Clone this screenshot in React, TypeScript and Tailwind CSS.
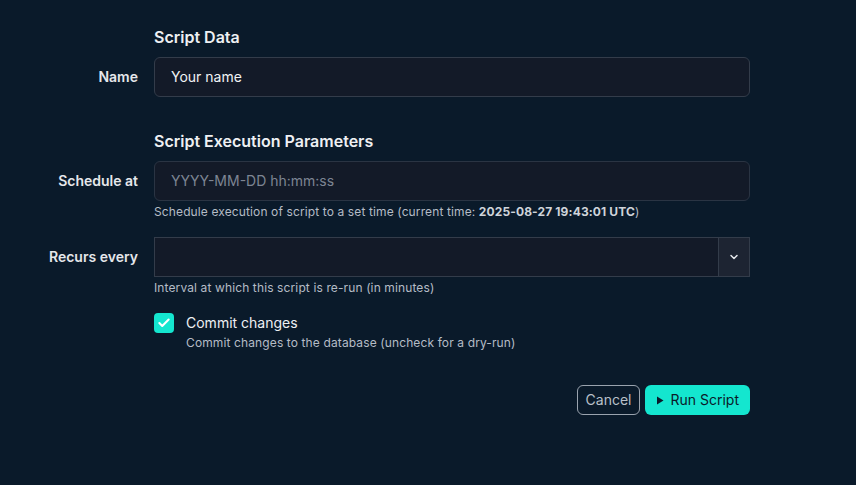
import { Check, ChevronDown } from "lucide-react";

function Label({ text }: { text: string }) {
    return <div className="w-[138px] shrink-0 h-10 flex items-center justify-end text-sm font-semibold text-[#e5e7eb]">
        {text}
    </div>
}

export default function App() {
    return <div className="min-h-[485px] w-full bg-[#0a1a2a] text-[#e5e7eb] pt-[27px]" style={{ fontFamily: "Inter, 'Noto Sans', sans-serif" }}>
        <div className="flex flex-col">
            <div className="pl-[154px] text-base leading-5 font-semibold text-[#eef0f3]">Script Data</div>

            <div className="flex mt-[10px]">
                <Label text="Name" />
                <div className="ml-4 w-[596px]">
                    <div className="h-10 rounded-md border border-[#333c4a] bg-[#131a28] flex items-center px-4 text-sm text-[#f1f3f5]">
                        Your name
                    </div>
                </div>
            </div>

            <div className="pl-[154px] mt-[34px] text-base leading-5 font-semibold text-[#eef0f3]">Script Execution Parameters</div>

            <div className="flex mt-[10px]">
                <Label text="Schedule at" />
                <div className="ml-4 w-[596px]">
                    <div className="h-10 rounded-md border border-[#2a3443] bg-[#131a28] flex items-center px-4 text-sm text-[#7d8593]">
                        YYYY-MM-DD hh:mm:ss
                    </div>
                    <div className="mt-[3px] text-xs leading-4 tracking-[0.01em] text-[#b5bcc6]">
                        Schedule execution of script to a set time (current time: <span className="font-bold text-[#cfd4da]">2025-08-27 19:43:01 UTC</span>)
                    </div>
                </div>
            </div>

            <div className="flex mt-[17px]">
                <Label text="Recurs every" />
                <div className="ml-4 w-[596px]">
                    <div className="h-10 border border-[#333c4a] bg-[#131a28] flex">
                        <div className="flex-1" />
                        <div className="w-[31px] border-l border-[#333c4a] bg-[#1d2432] flex items-center justify-center">
                            <ChevronDown size={12} strokeWidth={3} className="text-[#e5e7eb]" />
                        </div>
                    </div>
                    <div className="mt-[3px] text-xs leading-4 tracking-[0.01em] text-[#b5bcc6]">
                        Interval at which this script is re-run (in minutes)
                    </div>
                </div>
            </div>

            <div className="flex mt-[17px] pl-[154px]">
                <div className="w-5 h-5 rounded-[4px] bg-[#14e6cf] flex items-center justify-center shrink-0">
                    <Check size={14} strokeWidth={3.5} className="text-white" />
                </div>
                <div className="ml-3">
                    <div className="text-sm leading-5 text-[#eef0f3]">Commit changes</div>
                    <div className="mt-[2px] text-xs leading-4 tracking-[0.01em] text-[#b5bcc6]">Commit changes to the database (uncheck for a dry-run)</div>
                </div>
            </div>

            <div className="flex justify-end gap-[5px] w-[750px] mt-[34px]">
                <button className="h-[30px] px-[8px] rounded-md border border-[#9aa3ae] text-sm text-[#b9c0c9]">Cancel</button>
                <button className="h-[30px] px-[11px] rounded-md bg-[#14e6cf] text-sm text-[#0b1a2a] flex items-center gap-[6px]">
                    <svg width="8" height="9" viewBox="0 0 8 9"><path d="M1 0.5 L7.5 4.5 L1 8.5 Z" fill="#0b1a2a" /></svg>
                    Run Script
                </button>
            </div>
        </div>
    </div>
}
